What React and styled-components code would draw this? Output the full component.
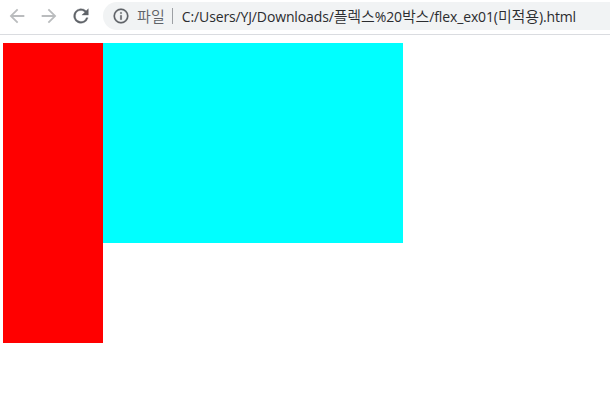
import React from 'react';
import styled, { createGlobalStyle } from 'styled-components';

const Global = createGlobalStyle`
  body { margin: 0; background: #fff; overflow: hidden; }
`;
const Toolbar = styled.header`
  display: flex;
  align-items: center;
  box-sizing: border-box;
  height: 35px;
  padding: 0 0 2px 6px;
  border-bottom: 1px solid #dadce0;
`;
const NavIcon = styled.svg`
  width: 22px;
  height: 22px;
  flex: none;
  margin-right: 10px;
  fill: ${(p) => p.$color};
  stroke: ${(p) => p.$color};
  stroke-width: ${(p) => p.$stroke || 0};
`;
const AddressBar = styled.div`
  display: flex;
  align-items: center;
  box-sizing: border-box;
  height: 28px;
  flex: 1;
  margin-left: 1px;
  padding-left: 9px;
  border-radius: 14px 0 0 14px;
  background: #f1f3f4;
  font: 14px/20px "Open Sans", sans-serif;
  white-space: nowrap;
`;
const InfoIcon = styled.svg`
  width: 18px;
  height: 18px;
  flex: none;
  fill: #5f6368;
  stroke: #5f6368;
  stroke-width: 0.25;
`;
const Hangul = styled.span`
  font: 350 15px/20px "Noto Sans CJK KR", sans-serif;
`;
const Scheme = styled(Hangul)`
  margin-left: 7px;
  color: #5f6368;
  letter-spacing: 0.1px;
`;
const Divider = styled.span`
  width: 1px;
  height: 16px;
  margin: 0 9px 0 7px;
  background: #9da0a4;
`;
const Url = styled.span`
  color: #2b2c2f;
  letter-spacing: -0.13px;
`;
const Page = styled.main`
  display: flex;
  align-items: flex-start;
  padding: 8px 3px;
`;
const Box = styled.div`
  width: ${(p) => p.$w}px;
  height: ${(p) => p.$h}px;
  background: ${(p) => p.$color};
`;

export default function App() {
  return (
    <>
      <Global />
      <Toolbar>
        <NavIcon $color="#babcbe" viewBox="0 0 24 24"><path d="M20 11H7.83l5.59-5.59L12 4l-8 8 8 8 1.41-1.41L7.83 13H20v-2z" /></NavIcon>
        <NavIcon $color="#babcbe" viewBox="0 0 24 24"><path d="M12 4l-1.41 1.41L16.17 11H4v2h12.17l-5.58 5.59L12 20l8-8z" /></NavIcon>
        <NavIcon $color="#5f6368" $stroke={0.35} viewBox="0 0 24 24"><path d="M17.65 6.35A8 8 0 1 0 19.73 14h-2.08A6 6 0 1 1 12 6c1.66 0 3.14.69 4.22 1.78L13 11h7V4l-2.35 2.35z" /></NavIcon>
        <AddressBar>
          <InfoIcon viewBox="0 0 24 24"><path d="M11 7h2v2h-2zm0 4h2v6h-2zm1-9a10 10 0 1 0 0 20 10 10 0 0 0 0-20zm0 18a8 8 0 1 1 0-16 8 8 0 0 1 0 16z" /></InfoIcon>
          <Scheme>파일</Scheme>
          <Divider />
          <Url>C:/Users/YJ/Downloads/<Hangul>플렉스</Hangul>%20<Hangul>박스</Hangul>/flex_ex01(<Hangul>미적용</Hangul>).html</Url>
        </AddressBar>
      </Toolbar>
      <Page>
        <Box $w={100} $h={300} $color="#ff0000" />
        <Box $w={300} $h={200} $color="#00ffff" />
      </Page>
    </>
  );
}
